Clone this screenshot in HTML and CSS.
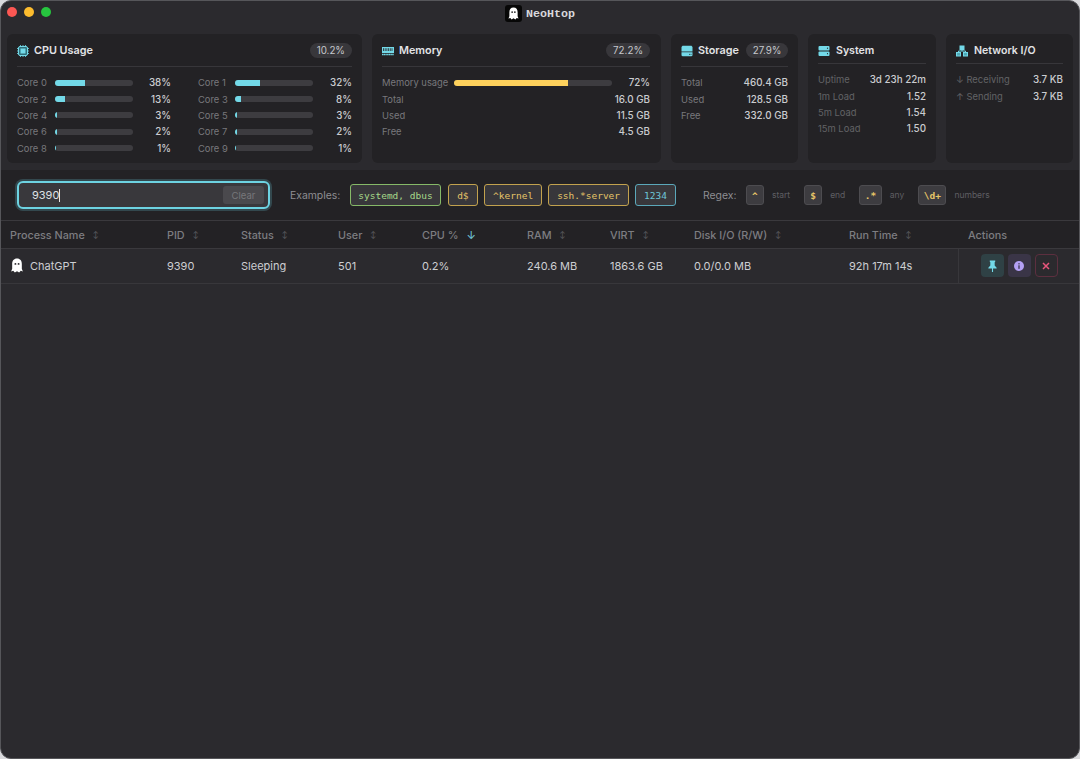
FILE: index.html
```html
<!DOCTYPE html>
<html lang="en">
<head>
    <meta charset="UTF-8">
    <title>NeoHtop</title>
    <link rel="stylesheet" href="styles.css">
</head>
<body>
<div class="window">
    <header class="titlebar">
        <div class="traffic">
            <span class="dot red"></span>
            <span class="dot yellow"></span>
            <span class="dot green"></span>
        </div>
        <div class="app-title">
            <span class="app-logo">
                <svg width="12" height="14" viewBox="0 0 12 14"><path d="M6 .5C3 .5 1.500 2.700 1.500 5.500V10L.5 12.500 2.500 12 4 13.500 6 12.300 8 13.500 9.500 12 11.500 12.500 10.500 10V5.500C10.500 2.700 9 .5 6 .5Z" fill="#fff"/><circle cx="4.500" cy="5.500" r=".9" fill="#111"/><circle cx="7.500" cy="5.500" r=".9" fill="#111"/></svg>
            </span>
            <span class="app-name">NeoHtop</span>
        </div>
    </header>

    <section class="stats">
        <div class="panel panel-cpu">
            <div class="panel-head">
                <svg class="panel-icon" width="12" height="12" viewBox="0 0 12 12"><rect x="1.500" y="1.500" width="9" height="9" rx="1.500" fill="#2f6f7a" stroke="#73d9e8"/><rect x="3.500" y="3.500" width="5" height="5" fill="#73d9e8"/><path d="M3.500 0v1.500M6 0v1.500M8.500 0v1.500M3.500 10.500V12M6 10.500V12M8.500 10.500V12M0 3.500h1.500M0 6h1.500M0 8.500h1.500M10.500 3.500H12M10.500 6H12M10.500 8.500H12" stroke="#73d9e8" stroke-width=".8"/></svg>
                <h2>CPU Usage</h2>
                <span class="pill">10.2%</span>
            </div>
            <div class="core-grid">
                <div class="bar-row"><span class="label core-label">Core 0</span><div class="track"><div class="fill" style="width:38%"></div></div><span class="value">38%</span></div>
                <div class="bar-row"><span class="label core-label">Core 1</span><div class="track"><div class="fill" style="width:32%"></div></div><span class="value">32%</span></div>
                <div class="bar-row"><span class="label core-label">Core 2</span><div class="track"><div class="fill" style="width:13%"></div></div><span class="value">13%</span></div>
                <div class="bar-row"><span class="label core-label">Core 3</span><div class="track"><div class="fill" style="width:8%"></div></div><span class="value">8%</span></div>
                <div class="bar-row"><span class="label core-label">Core 4</span><div class="track"><div class="fill" style="width:3%"></div></div><span class="value">3%</span></div>
                <div class="bar-row"><span class="label core-label">Core 5</span><div class="track"><div class="fill" style="width:3%"></div></div><span class="value">3%</span></div>
                <div class="bar-row"><span class="label core-label">Core 6</span><div class="track"><div class="fill" style="width:2%"></div></div><span class="value">2%</span></div>
                <div class="bar-row"><span class="label core-label">Core 7</span><div class="track"><div class="fill" style="width:2%"></div></div><span class="value">2%</span></div>
                <div class="bar-row"><span class="label core-label">Core 8</span><div class="track"><div class="fill" style="width:1%"></div></div><span class="value">1%</span></div>
                <div class="bar-row"><span class="label core-label">Core 9</span><div class="track"><div class="fill" style="width:1%"></div></div><span class="value">1%</span></div>
            </div>
        </div>

        <div class="panel panel-mem">
            <div class="panel-head">
                <svg class="panel-icon" width="12" height="12" viewBox="0 0 12 12"><rect x="0" y="2" width="12" height="6" fill="#73d9e8"/><path d="M1.500 3.200v2.800M3.200 3.200v2.800M4.900 3.200v2.800M6.600 3.200v2.800M8.300 3.200v2.800M10 3.200v2.800" stroke="#232225" stroke-width=".8"/><path d="M0 9.500h12" stroke="#73d9e8" stroke-width="1.400" stroke-dasharray="1.400 .3"/></svg>
                <h2>Memory</h2>
                <span class="pill">72.2%</span>
            </div>
            <div class="bar-row mem-bar"><span class="label">Memory usage</span><div class="track"><div class="fill fill-mem" style="width:72%"></div></div><span class="value">72%</span></div>
            <div class="kv"><span class="label">Total</span><span class="value">16.0 GB</span></div>
            <div class="kv"><span class="label">Used</span><span class="value">11.5 GB</span></div>
            <div class="kv"><span class="label">Free</span><span class="value">4.5 GB</span></div>
        </div>

        <div class="panel panel-storage">
            <div class="panel-head">
                <svg class="panel-icon" width="12" height="12" viewBox="0 0 12 12"><path d="M1.500 .8h9L11.500 2v4.500H.5V2Z" fill="#73d9e8"/><path d="M.5 7.300h11v3.200l-1 .8h-9l-1-.8Z" fill="#73d9e8"/><circle cx="8.500" cy="9.300" r=".5" fill="#232225"/><circle cx="10" cy="9.300" r=".5" fill="#232225"/></svg>
                <h2>Storage</h2>
                <span class="pill">27.9%</span>
            </div>
            <div class="kv"><span class="label">Total</span><span class="value">460.4 GB</span></div>
            <div class="kv"><span class="label">Used</span><span class="value">128.5 GB</span></div>
            <div class="kv"><span class="label">Free</span><span class="value">332.0 GB</span></div>
        </div>

        <div class="panel panel-small">
            <div class="panel-head">
                <svg class="panel-icon" width="12" height="12" viewBox="0 0 12 12"><rect x="0.500" y="1" width="11" height="4.500" rx="1" fill="#73d9e8"/><rect x="0.500" y="6.500" width="11" height="4.500" rx="1" fill="#73d9e8"/><circle cx="9.500" cy="3.200" r=".6" fill="#232225"/><circle cx="9.500" cy="8.700" r=".6" fill="#232225"/></svg>
                <h2>System</h2>
            </div>
            <div class="kv"><span class="label dim">Uptime</span><span class="value">3d 23h 22m</span></div>
            <div class="kv"><span class="label dim">1m Load</span><span class="value">1.52</span></div>
            <div class="kv"><span class="label dim">5m Load</span><span class="value">1.54</span></div>
            <div class="kv"><span class="label dim">15m Load</span><span class="value">1.50</span></div>
        </div>

        <div class="panel panel-small">
            <div class="panel-head">
                <svg class="panel-icon" width="12" height="12" viewBox="0 0 12 12"><g fill="#4fa9b8" stroke="#73d9e8" stroke-width="1"><rect x="4" y="1" width="4" height="3.500" fill="#73d9e8"/><rect x=".5" y="7.500" width="4" height="3.500"/><rect x="7.500" y="7.500" width="4" height="3.500"/><path d="M6 4.500V6M2.500 7.500V6h7v1.500" fill="none"/></g></svg>
                <h2>Network I/O</h2>
            </div>
            <div class="kv"><span class="label dim">↓ Receiving</span><span class="value">3.7 KB</span></div>
            <div class="kv"><span class="label dim">↑ Sending</span><span class="value">3.7 KB</span></div>
        </div>
    </section>

    <section class="toolbar">
        <div class="search">
            <span class="search-text">9390</span><span class="caret"></span>
            <button class="clear" type="button">Clear</button>
        </div>
        <span class="tool-label examples-label">Examples:</span>
        <div class="examples">
            <span class="chip chip-green">systemd, dbus</span>
            <span class="chip chip-yellow chip-short">d$</span>
            <span class="chip chip-yellow">^kernel</span>
            <span class="chip chip-yellow">ssh.*server</span>
            <span class="chip chip-blue">1234</span>
        </div>
        <span class="tool-label regex-label">Regex:</span>
        <div class="regex">
            <span class="key">^</span><span class="hint">start</span>
            <span class="key">$</span><span class="hint">end</span>
            <span class="key">.*</span><span class="hint">any</span>
            <span class="key">\d+</span><span class="hint">numbers</span>
        </div>
    </section>

    <table class="procs">
        <colgroup>
            <col class="c-name"><col class="c-pid"><col class="c-status"><col class="c-user"><col class="c-cpu">
            <col class="c-ram"><col class="c-virt"><col class="c-disk"><col class="c-time"><col>
        </colgroup>
        <thead>
            <tr>
                <th>Process Name<span class="sort">↕</span></th>
                <th>PID<span class="sort">↕</span></th>
                <th>Status<span class="sort">↕</span></th>
                <th>User<span class="sort">↕</span></th>
                <th>CPU %<span class="sort active">↓</span></th>
                <th>RAM<span class="sort">↕</span></th>
                <th>VIRT<span class="sort">↕</span></th>
                <th>Disk I/O (R/W)<span class="sort">↕</span></th>
                <th>Run Time<span class="sort">↕</span></th>
                <th class="actions-head">Actions</th>
            </tr>
        </thead>
        <tbody>
            <tr>
                <td>
                    <div class="proc-name">
                        <svg width="14" height="15" viewBox="0 0 12 14"><path d="M6 .5C3 .5 1.500 2.700 1.500 5.500V10L.5 12.500 2.500 12 4 13.500 6 12.300 8 13.500 9.500 12 11.500 12.500 10.500 10V5.500C10.500 2.700 9 .5 6 .5Z" fill="#fff"/><circle cx="4.500" cy="5.500" r=".9" fill="#2b2a2e"/><circle cx="7.500" cy="5.500" r=".9" fill="#2b2a2e"/></svg>
                        ChatGPT
                    </div>
                </td>
                <td>9390</td>
                <td>Sleeping</td>
                <td>501</td>
                <td>0.2%</td>
                <td>240.6 MB</td>
                <td>1863.6 GB</td>
                <td>0.0/0.0 MB</td>
                <td>92h 17m 14s</td>
                <td class="actions">
                    <div class="action-group">
                        <button class="act act-pin" type="button"><svg width="11" height="12" viewBox="0 0 10 11"><path d="M2.500 .5h5v1L7 2v3l1.800 2v.8H5.500V11h-1V7.800H1.200V7L3 5V2l-.5-.5Z" fill="#73d9e8"/></svg></button>
                        <button class="act act-info" type="button"><svg width="10" height="10" viewBox="0 0 10 10"><circle cx="5" cy="5" r="5" fill="#b4a0f5"/><rect x="4.400" y="4.300" width="1.200" height="3.500" fill="#2f2b3d"/><rect x="4.400" y="2.200" width="1.200" height="1.200" fill="#2f2b3d"/></svg></button>
                        <button class="act act-kill" type="button"><svg width="8" height="8" viewBox="0 0 8 8"><path d="M1 1l6 6M7 1L1 7" stroke="#e8567c" stroke-width="1.500"/></svg></button>
                    </div>
                </td>
            </tr>
        </tbody>
    </table>
</div>
</body>
</html>
```

FILE: styles.css
```css
/* Basic Reset */
* {
    margin: 0;
    padding: 0;
    box-sizing: border-box;
}

html, body {
    height: 100%;
    overflow: hidden;
    background: #d9d9dc;
}

body {
    font-family: Inter, "Liberation Sans", sans-serif;
    font-size: 11px;
    color: #cdced2;
}

.window {
    height: 759px;
    background: #2b2a2e;
    border: 1px solid #56565a;
    border-radius: 11px;
    overflow: hidden;
}

/* Title bar */
.titlebar {
    height: 33px;
    display: flex;
    align-items: center;
    justify-content: center;
    position: relative;
    padding-bottom: 10px;
    padding-top: 2px;
}

.traffic {
    position: absolute;
    left: 6px;
    top: 6px;
    display: flex;
    gap: 7px;
}

.dot {
    width: 10px;
    height: 10px;
    border-radius: 50%;
}

.red { background: #fc5753; }
.yellow { background: #fdbc2e; }
.green { background: #27c53f; }

.app-title {
    display: flex;
    align-items: center;
    gap: 4px;
}

.app-logo {
    width: 17px;
    height: 17px;
    background: #070707;
    border-radius: 3px;
    display: flex;
    align-items: center;
    justify-content: center;
}

.app-logo svg {
    width: 11px;
    height: 13px;
}

.app-name {
    font-family: "Liberation Mono", monospace;
    font-size: 11.7px;
    font-weight: 700;
    color: #d8d8dc;
}

/* Stat panels */
.stats {
    display: flex;
    gap: 10px;
    padding: 0 6px;
    height: 136px;
}

.panel {
    background: #232225;
    border-radius: 6px;
    height: 129px;
    padding: 10px;
}

.panel-cpu { width: 355px; }
.panel-mem { width: 289px; padding-right: 11px; }
.panel-storage { width: 127px; }
.panel-small { width: 128px; padding-top: 8px; }
.panel-small:last-child { width: 127px; }

.panel-head {
    display: flex;
    align-items: center;
    gap: 5px;
    padding-bottom: 9px;
    margin-bottom: 7.7px;
    border-bottom: 1px solid #37363a;
    box-sizing: content-box;
    height: 13px;
}

.panel-small .panel-head {
    margin-bottom: 7.7px;
    padding-top: 2px;
    padding-bottom: 6px;
    gap: 6px;
}

.panel-head h2 {
    font-size: 10.8px;
    font-weight: 600;
    color: #e2e3e6;
    flex: 1;
    white-space: nowrap;
}

.panel-small .panel-head h2 {
    font-size: 10.6px;
}

.panel-icon {
    flex: none;
}

.pill {
    background: #38373b;
    border-radius: 8px;
    padding: 2px 7px;
    font-size: 9.8px;
    color: #c6c7cc;
    line-height: 11px;
}

.panel-storage .pill {
    padding: 2px 6.5px;
}

.core-grid {
    display: grid;
    grid-template-columns: 154px 154px;
    column-gap: 27px;
}

.bar-row, .kv {
    display: flex;
    align-items: center;
    height: 16.3px;
    font-size: 9.8px;
    white-space: nowrap;
}

.kv {
    justify-content: space-between;
}

.label {
    color: #78787c;
    font-size: 9.4px;
}

.dim {
    color: #626266;
}

.core-label {
    width: 38px;
    flex: none;
}

.bar-row:nth-child(even) .core-label {
    width: 37px;
}

.value {
    color: #cbccd0;
    font-weight: 500;
    text-align: right;
}

.bar-row .value {
    flex: 1;
}

.track {
    width: 78px;
    height: 6px;
    background: #3d3c40;
    border-radius: 3px;
    overflow: hidden;
    flex: none;
}

.fill {
    height: 100%;
    background: #73d9e8;
}

.mem-bar .label {
    margin-right: 6px;
}

.mem-bar .track {
    width: 158px;
}

.fill-mem {
    background: #fdd15c;
}

/* Search and regex toolbar */
.toolbar {
    background: #232225;
    height: 51px;
    display: flex;
    align-items: center;
    border-bottom: 1px solid #3a393d;
    padding-left: 16px;
    white-space: nowrap;
}

.search {
    width: 253px;
    height: 28px;
    background: #39383c;
    border: 2px solid #6dd3e2;
    border-radius: 6px;
    box-shadow: 0 0 0 2px rgba(109, 211, 226, 0.22);
    display: flex;
    align-items: center;
    padding-left: 13px;
    padding-right: 4px;
    flex: none;
}

.search-text {
    font-size: 11px;
    color: #dfe0e4;
}

.caret {
    width: 1px;
    height: 13px;
    background: #e6e6e6;
}

.clear {
    margin-left: auto;
    width: 41px;
    height: 18px;
    background: #4a494d;
    border: none;
    border-radius: 3px;
    color: #77777b;
    font-family: inherit;
    font-size: 9.5px;
}

.tool-label {
    font-size: 10.4px;
    color: #8e8e92;
}

.examples-label {
    margin-left: 20px;
}

.examples {
    display: flex;
    gap: 6px;
    margin-left: 10px;
}

.chip {
    height: 22px;
    display: flex;
    align-items: center;
    padding: 0 8px;
    background: #38373b;
    border: 1px solid;
    border-radius: 3px;
    font-family: "DejaVu Sans Mono", monospace;
    font-size: 9.5px;
}

.chip-green { color: #a6d98a; border-color: #86b968; padding: 0 7px; margin-right: 1px; }
.chip-yellow { color: #e5c468; border-color: #c2a24e; }
.chip-short { padding: 0 8.5px; }
.chip-blue { color: #6fc6d8; border-color: #5ba8ba; }

.regex-label {
    margin-left: 27px;
}

.regex {
    display: flex;
    align-items: center;
    margin-left: 9.5px;
}

.key {
    height: 20px;
    min-width: 18px;
    padding: 0 4.5px;
    display: flex;
    align-items: center;
    justify-content: center;
    background: #3d3c40;
    border: 1px solid #4d4c50;
    border-radius: 3px;
    font-family: "DejaVu Sans Mono", monospace;
    font-size: 9.5px;
    font-weight: 700;
    color: #e5c468;
}

.hint {
    font-size: 8.5px;
    color: #5f5f63;
    margin: 0 14px 0 8px;
}

/* Process table */
.procs {
    width: 100%;
    border-collapse: collapse;
    table-layout: fixed;
    font-size: 11px;
}

.c-name { width: 157px; }
.c-pid { width: 74px; }
.c-status { width: 97px; }
.c-user { width: 84px; }
.c-cpu { width: 105px; }
.c-ram { width: 83px; }
.c-virt { width: 84px; }
.c-disk { width: 155px; }
.c-time { width: 118px; }

.procs th {
    height: 27px;
    text-align: left;
    font-weight: 500;
    font-size: 10.8px;
    color: #7d7d81;
    padding-left: 9px;
    padding-top: 2px;
    background: #232225;
    border-bottom: 1px solid #3a393d;
    white-space: nowrap;
}

.procs th.actions-head {
    padding-left: 10px;
}

.sort {
    font-size: 7px;
    color: #5c5c60;
    margin-left: 8px;
    vertical-align: 2px;
}

.sort.active {
    font-size: 11px;
    color: #6dbfd0;
    vertical-align: 0;
}

.procs td {
    height: 35px;
    padding-left: 9px;
    color: #cdced2;
    border-bottom: 1px solid #38373b;
    white-space: nowrap;
}

.proc-name {
    display: flex;
    align-items: center;
    gap: 6px;
}

.procs td.actions {
    border-left: 1px solid #38373b;
    padding-left: 22px;
}

.action-group {
    display: flex;
    gap: 4px;
}

.act {
    width: 23px;
    height: 23px;
    border: none;
    border-radius: 4px;
    display: flex;
    align-items: center;
    justify-content: center;
}

.act-pin { background: #2f4145; }
.act-info { background: #3a3547; }
.act-kill { background: #2b2a2e; border: 1px solid #5c2f3f; }
```
